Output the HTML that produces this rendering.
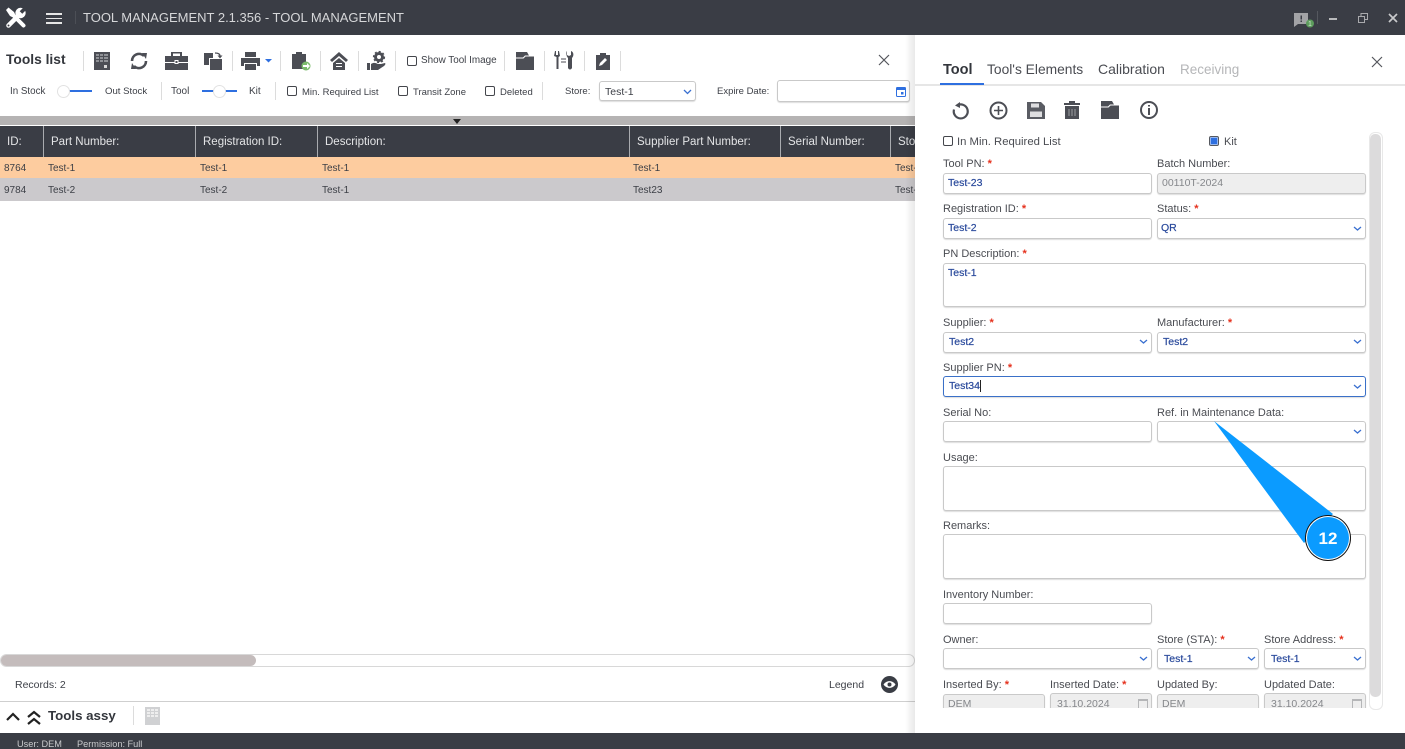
<!DOCTYPE html>
<html><head><meta charset="utf-8">
<style>
html,body{margin:0;padding:0;width:1405px;height:749px;overflow:hidden;background:#fff}
body{font-family:"Liberation Sans",sans-serif;font-size:10.5px;color:#3c3f46;position:relative}
.a,.t,.l,.i,.c,.s,.tx{position:absolute}
.t{white-space:nowrap;line-height:14px}
.l{white-space:nowrap;line-height:14px;font-size:11px;color:#4a4c52;left:0;margin-top:1px}
.l b{color:#e5301c;font-weight:bold;font-size:11px}
.i{box-sizing:border-box;border:1px solid #c9c9c9;border-radius:3px;background:#fff;height:21px;color:#2a4a9c;font-size:10.5px;line-height:18px;padding-left:4px;white-space:nowrap;box-shadow:0 1px 1px #ddd;-webkit-text-stroke:.2px #2a4a9c}
.g{background:#eee;color:#85878b;-webkit-text-stroke:0}
.c{box-sizing:border-box;width:10px;height:10px;border:1.5px solid #44464c;border-radius:2px;background:#fff}
.h{position:absolute;top:126px;height:31px;line-height:32px;color:#e3e4e6;font-size:11.5px;white-space:nowrap;border-left:1px solid #a9abaf;padding-left:7px;box-sizing:border-box}
.r{position:absolute;white-space:nowrap;font-size:10px;color:#3c3f46;line-height:14px}
.sp{position:absolute;width:1px;background:#dcdcdc}
svg{position:absolute;overflow:visible}
.ic{fill:#4c4e55}
.b{filter:blur(.3px)}
</style></head><body>

<!-- title bar -->
<div class="a" style="left:0;top:0;width:1405px;height:35px;background:#3a3d45"></div>
<svg class="b" style="left:5px;top:7px" width="22" height="22" viewBox="0 0 22 22">
<path fill="none" stroke="#fff" stroke-width="4" stroke-linecap="round" d="M10 10L18.500 18.500"/>
<path fill="#fff" d="M1 3l2.500-2.500L9 5l1.500 3L8 10.500 5 9z"/>
<path fill="none" stroke="#fff" stroke-width="4.500" stroke-linecap="round" d="M3.500 18.500L13 9"/>
<circle cx="15.500" cy="6" r="5.200" fill="#fff"/>
<path stroke="#3a3d45" stroke-width="3.600" d="M16 5.500L22 -.5"/>
<circle cx="3.500" cy="18.500" r="1" fill="#3a3d45"/>
</svg>
<div class="a" style="left:46px;top:13px;width:16px;height:1.500px;background:#e6e6e6"></div>
<div class="a" style="left:46px;top:17.500px;width:16px;height:1.500px;background:#e6e6e6"></div>
<div class="a" style="left:46px;top:22px;width:16px;height:1.500px;background:#e6e6e6"></div>
<div class="a" style="left:75px;top:11px;width:1px;height:13px;background:#4c4f56"></div>
<div class="t" style="left:83px;top:11px;font-size:13px;color:#d6d7d9">TOOL MANAGEMENT 2.1.356 - TOOL MANAGEMENT</div>
<svg class="b" style="left:1294px;top:13px" width="24" height="17" viewBox="0 0 24 17"><path fill="#a2a3a6" d="M0 0h14v11H4l-4 3z"/><rect x="6.500" y="2.500" width="1.500" height="4" fill="#3a3d45"/><rect x="6.500" y="7.500" width="1.500" height="1.500" fill="#3a3d45"/><circle cx="16" cy="10.500" r="4" fill="#5c9c5c"/><text x="16" y="13" text-anchor="middle" font-size="7" fill="#cfe5cf" font-family="Liberation Sans, sans-serif">1</text></svg>
<div class="a" style="left:1317px;top:11px;width:1px;height:13px;background:#55585f"></div>
<div class="a" style="left:1329px;top:18px;width:8px;height:2px;background:#b9babc"></div>
<svg style="left:1358px;top:13px" width="10" height="10" viewBox="0 0 10 10"><path fill="none" stroke="#a9aaad" stroke-width="1" d="M.5 3.500h6v6h-6zM3 3.500V.5h6.500v6H6.500"/></svg>
<svg style="left:1388px;top:13px" width="10" height="10" viewBox="0 0 10 10"><path stroke="#c9cacc" stroke-width="1.700" d="M1 1l8 8M9 1L1 9"/></svg>

<!-- toolbar left -->
<div class="t" style="left:6px;top:53px;font-size:13.800px;font-weight:bold;color:#33363c">Tools list</div>
<div class="sp" style="left:83px;top:51px;height:20px"></div>
<svg class="b" style="left:94px;top:52px" width="16" height="18" viewBox="0 0 16 18"><path class="ic" d="M0 0h16v18H0z"/><path fill="#8f9196" d="M2 2h3v2H2zM6 2h3v2H6zM10 2h4v2h-4zM2 5h3v2H2zM6 5h3v2H6zM10 5h4v2h-4zM2 8h3v2H2zM6 8h3v2H6zM10 8h4v2h-4z"/><path fill="#d8d8d8" d="M10 13h3v3h-3z"/></svg>
<svg class="b" style="left:129px;top:51px" width="20" height="20" viewBox="0 0 20 20"><path fill="none" stroke="#4c4e55" stroke-width="2.600" d="M3 10a7 7 0 0 1 12-5M17 10a7 7 0 0 1-12 5"/><path class="ic" d="M13 2l5 0-1 6zM7 18l-5 0 1-6z"/></svg>
<svg class="b" style="left:165px;top:52px" width="23" height="18" viewBox="0 0 23 18"><path class="ic" d="M0 4h23v6H0zM0 11h23v7H0zM6 4V0h11v4h-2V1.500H8V4z"/><rect x="9.500" y="8" width="4" height="4" fill="#fff"/><rect x="10.500" y="9" width="2" height="2" fill="#4c4e55"/></svg>
<svg class="b" style="left:204px;top:52px" width="18" height="18" viewBox="0 0 18 18"><path class="ic" d="M0 1h9v5H5v7H0z"/><path class="ic" d="M6 7h12v11H6z"/><path fill="none" stroke="#4c4e55" stroke-width="1.300" d="M11 1c3 0 5 1 5 3"/><path class="ic" d="M13.500 3.500h5L16 6.500z"/></svg>
<div class="sp" style="left:232px;top:51px;height:20px"></div>
<svg class="b" style="left:241px;top:52px" width="32" height="18" viewBox="0 0 32 18"><path class="ic" d="M4 0h11v5H4zM0 6h19v8h-3v-3H3v3H0zM4 12h11v6H4z"/><path fill="#2e6fe0" d="M24 7h7l-3.500 3.500z"/></svg>
<div class="sp" style="left:280px;top:51px;height:20px"></div>
<svg class="b" style="left:292px;top:51px" width="20" height="20" viewBox="0 0 20 20"><path class="ic" d="M0 3h4V1h6v2h4v15H0z"/><circle cx="14" cy="15" r="4.500" fill="#7cbb6c"/><path fill="#fff" d="M11 14h4v-2l3 3-3 3v-2h-4z"/></svg>
<div class="sp" style="left:320px;top:51px;height:20px"></div>
<svg class="b" style="left:330px;top:52px" width="18" height="18" viewBox="0 0 18 18"><path class="ic" d="M9 0l9 8-2 2-7-6-7 6-2-2zM3 11l6-5 6 5v7H3z"/><path fill="#fff" d="M6 11h6v1H6zM6 14h6v1H6z"/></svg>
<div class="sp" style="left:358px;top:51px;height:20px"></div>
<svg class="b" style="left:367px;top:51px" width="19" height="20" viewBox="0 0 19 20"><circle cx="12" cy="6" r="3.500" fill="none" stroke="#4c4e55" stroke-width="3"/><circle cx="12" cy="6" r="5.200" fill="none" stroke="#4c4e55" stroke-width="1.800" stroke-dasharray="2 2"/><path class="ic" d="M0 12h3v7H0zM4 13c3-2 5-1 7 0h3l4-1c1 1 0 2-1 3l-6 4H4z"/></svg>
<div class="sp" style="left:395px;top:51px;height:20px"></div>
<div class="c" style="left:407px;top:56px"></div>
<div class="t" style="left:421px;top:54px;font-size:9.900px">Show Tool Image</div>
<div class="sp" style="left:504px;top:51px;height:20px"></div>
<svg class="b" style="left:516px;top:52px" width="18" height="18" viewBox="0 0 18 18"><path class="ic" d="M0 0h11l2 3.500H9L7 5.500H0zM0 6.500h7.500l2-2H18V18H0z"/></svg>
<div class="sp" style="left:544px;top:51px;height:20px"></div>
<svg class="b" style="left:554px;top:51px" width="20" height="19" viewBox="0 0 20 19"><path class="ic" d="M1 0h1v4h2V0h1l1 5-1.500 1v12h-2V6L0 5zM13 0v4l2 1 2-1V0c3 1 3 5 1 7v10c-1 2-3 2-4 0V7c-2-2-2-6-1-7z"/><path stroke="#4c4e55" stroke-width="1" d="M7 8h5M7 11h5"/></svg>
<div class="sp" style="left:584px;top:51px;height:20px"></div>
<svg class="b" style="left:596px;top:53px" width="14" height="17" viewBox="0 0 14 17"><path class="ic" d="M0 2h4V0h6v2h4v15H0z"/><path fill="#fff" d="M3 13l1-3 5-5 2 2-5 5z"/></svg>
<div class="sp" style="left:620px;top:51px;height:20px"></div>
<svg style="left:879px;top:55px" width="10" height="10" viewBox="0 0 10 10"><path stroke="#55575d" stroke-width="1.200" d="M0 0l10 10M10 0L0 10"/></svg>

<!-- toolbar row 2 -->
<div class="t" style="left:10px;top:85px;font-size:9.800px">In Stock</div>
<div class="a" style="left:64px;top:90px;width:28px;height:2px;background:#2e6fe0"></div>
<div class="a" style="left:57px;top:85px;width:11px;height:11px;border-radius:50%;background:#fff;border:1px solid #e2e2e2"></div>
<div class="t" style="left:105px;top:85px;font-size:9.600px">Out Stock</div>
<div class="sp" style="left:161px;top:82px;height:18px"></div>
<div class="t" style="left:171px;top:85px;font-size:10px">Tool</div>
<div class="a" style="left:202px;top:90px;width:35px;height:2px;background:#2e6fe0"></div>
<div class="a" style="left:213px;top:85px;width:11px;height:11px;border-radius:50%;background:#fff;border:1px solid #e2e2e2"></div>
<div class="t" style="left:249px;top:85px;font-size:10px">Kit</div>
<div class="sp" style="left:275px;top:82px;height:18px"></div>
<div class="c" style="left:287px;top:86px"></div>
<div class="t" style="left:302px;top:86px;font-size:9.500px">Min. Required List</div>
<div class="c" style="left:398px;top:86px"></div>
<div class="t" style="left:413px;top:86px;font-size:9.500px">Transit Zone</div>
<div class="c" style="left:485px;top:86px"></div>
<div class="t" style="left:500px;top:86px;font-size:9.500px">Deleted</div>
<div class="sp" style="left:542px;top:82px;height:18px"></div>
<div class="t" style="left:565px;top:85px;font-size:9.500px">Store:</div>
<div class="i" style="left:599px;top:81px;width:97px;height:20px;color:#3c3f46;-webkit-text-stroke:0;padding-left:5px;line-height:20px">Test-1</div>
<svg style="left:683px;top:89px" width="9" height="6" viewBox="0 0 9 6"><path fill="none" stroke="#3a70d0" stroke-width="1.300" d="M1 1l3.500 3.500L8 1"/></svg>
<div class="t" style="left:717px;top:85px;font-size:9.500px">Expire Date:</div>
<div class="i" style="left:777px;top:80px;width:133px;height:22px"></div>
<svg style="left:896px;top:86px" width="10" height="11" viewBox="0 0 10 11"><rect x=".5" y="1.500" width="9" height="9" rx="1" fill="none" stroke="#2e6fe0"/><rect x=".5" y="1" width="9" height="3" fill="#2e6fe0"/><rect x="5" y="6" width="2.500" height="2.500" fill="#2e6fe0"/></svg>

<!-- grid -->
<div class="a" style="left:0;top:116px;width:915px;height:9px;background:#b5b3b3"></div>
<svg style="left:453px;top:119px" width="8" height="5" viewBox="0 0 8 5"><path fill="#222" d="M0 0h8L4 5z"/></svg>
<div class="a" style="left:0;top:126px;width:915px;height:31px;background:#3a3d45"></div>
<div class="t" style="left:7px;top:135px;color:#e3e4e6;font-size:11.500px">ID:</div>
<div class="h" style="left:43px;width:152px">Part Number:</div>
<div class="h" style="left:195px;width:122px">Registration ID:</div>
<div class="h" style="left:317px;width:312px">Description:</div>
<div class="h" style="left:629px;width:151px">Supplier Part Number:</div>
<div class="h" style="left:780px;width:110px">Serial Number:</div>
<div class="h" style="left:890px;width:25px;overflow:hidden">Store</div>
<div class="a" style="left:0;top:157px;width:915px;height:21px;background:#fdcc9f"></div>
<div class="a" style="left:0;top:178px;width:915px;height:22.500px;background:#cbc9cc"></div>
<div class="r" style="left:4px;top:162px">8764</div>
<div class="r" style="left:48px;top:162px">Test-1</div>
<div class="r" style="left:200px;top:162px">Test-1</div>
<div class="r" style="left:322px;top:162px">Test-1</div>
<div class="r" style="left:633px;top:162px">Test-1</div>
<div class="r" style="left:895px;top:162px;width:20px;overflow:hidden">Test-1</div>
<div class="r" style="left:4px;top:184px">9784</div>
<div class="r" style="left:48px;top:184px">Test-2</div>
<div class="r" style="left:200px;top:184px">Test-2</div>
<div class="r" style="left:322px;top:184px">Test-1</div>
<div class="r" style="left:633px;top:184px">Test23</div>
<div class="r" style="left:895px;top:184px;width:20px;overflow:hidden">Test-1</div>

<!-- bottom left -->
<div class="a" style="left:0;top:654px;width:915px;height:13px;box-sizing:border-box;border:1px solid #d8d8d8;border-radius:7px;background:#fff"></div>
<div class="a" style="left:1px;top:655px;width:255px;height:11px;border-radius:6px;background:#c4bcbc"></div>
<div class="t" style="left:15px;top:678px;font-size:10.500px">Records: 2</div>
<div class="t" style="left:829px;top:678px;font-size:10.500px">Legend</div>
<svg style="left:881px;top:676px" width="17" height="17" viewBox="0 0 17 17"><circle cx="8.500" cy="8.500" r="8.500" fill="#3a3d45"/><path fill="#fff" d="M2.500 8.500c3-4.500 9-4.500 12 0-3 4.500-9 4.500-12 0z"/><circle cx="8.500" cy="8.500" r="2" fill="#3a3d45"/></svg>
<div class="a" style="left:0;top:701px;width:915px;height:1px;background:#cfcfcf"></div>
<svg style="left:6px;top:710px" width="36" height="17" viewBox="0 0 36 17"><path fill="none" stroke="#222" stroke-width="2.200" d="M1 10l6-6 6 6M22 7l6-5 6 5M22 14l6-5 6 5"/></svg>
<div class="t" style="left:48px;top:709px;font-size:13.300px;font-weight:bold;color:#33363c">Tools assy</div>
<div class="sp" style="left:133px;top:706px;height:19px"></div>
<svg style="left:145px;top:707px" width="15" height="18" viewBox="0 0 15 18"><path fill="#d0d1d3" d="M0 0h15v18H0z"/><path fill="#eee" d="M2 2h3v2H2zM6 2h3v2H6zM10 2h3v2h-3zM2 5h3v2H2zM6 5h3v2H6zM10 5h3v2h-3zM2 8h3v2H2zM6 8h3v2H6zM10 8h3v2h-3z"/></svg>

<!-- right panel -->
<div class="a" style="left:905px;top:35px;width:10px;height:698px;background:linear-gradient(to right,rgba(0,0,0,0),rgba(0,0,0,.09))"></div>
<div class="a" style="left:915px;top:35px;width:490px;height:698px;background:#fff"></div>
<div class="t" style="left:943px;top:63px;font-size:14.500px;font-weight:bold;color:#33363c">Tool</div>
<div class="t" style="left:987px;top:63px;font-size:13.800px;color:#4a4c52">Tool's Elements</div>
<div class="t" style="left:1098px;top:62px;font-size:14px;color:#4a4c52">Calibration</div>
<div class="t" style="left:1180px;top:63px;font-size:13.500px;color:#b5b6b8">Receiving</div>
<div class="a" style="left:915px;top:84px;width:490px;height:2px;background:#e6e6e6"></div>
<div class="a" style="left:940px;top:83px;width:44px;height:2px;background:#2e6fe0"></div>
<svg style="left:1372px;top:57px" width="10" height="10" viewBox="0 0 10 10"><path stroke="#55575d" stroke-width="1.200" d="M0 0l10 10M10 0L0 10"/></svg>

<svg class="b" style="left:952px;top:102px" width="18" height="18" viewBox="0 0 18 18"><path fill="none" stroke="#4c4e55" stroke-width="2.200" d="M5 3.500a7 7 0 1 1-3 4"/><path class="ic" d="M8 0v6L3 3.500z"/></svg>
<svg class="b" style="left:989px;top:101px" width="19" height="19" viewBox="0 0 19 19"><circle cx="9.500" cy="9.500" r="8" fill="none" stroke="#4c4e55" stroke-width="2"/><path stroke="#4c4e55" stroke-width="1.600" d="M5 9.500h9M9.500 5v9"/></svg>
<svg class="b" style="left:1027px;top:101px" width="18" height="18" viewBox="0 0 18 18"><path fill="#5a5c63" d="M0 1h14l4 4v13H0z"/><path fill="#fff" opacity=".8" d="M4 2.500h8v4H4zM3 10.500h12V16H3z"/></svg>
<svg class="b" style="left:1064px;top:101px" width="16" height="18" viewBox="0 0 16 18"><path class="ic" d="M5 0h6v2h5v2H0V2h5zM1 5h14v13H1z"/><path fill="#fff" opacity=".45" d="M4.500 8h1v7h-1zM7.500 8h1v7h-1zM10.500 8h1v7h-1z"/></svg>
<svg class="b" style="left:1101px;top:101px" width="18" height="18" viewBox="0 0 18 18"><path class="ic" d="M0 0h11l2 3.500H9L7 5.500H0zM0 6.500h7.500l2-2H18V18H0z"/></svg>
<svg class="b" style="left:1140px;top:101px" width="18" height="18" viewBox="0 0 18 18"><circle cx="9" cy="9" r="8" fill="none" stroke="#4c4e55" stroke-width="2"/><path stroke="#4c4e55" stroke-width="2" d="M9 4v1.500M9 7v7"/></svg>

<div class="c" style="left:943px;top:136px"></div>
<div class="t" style="left:957px;top:135px;font-size:11.300px;color:#4a4c52">In Min. Required List</div>
<div class="c" style="left:1209px;top:136px;border-color:#55585f;background:#2e6fe0;box-shadow:inset 0 0 0 .5px #fff"></div>
<div class="t" style="left:1224px;top:135px;font-size:11px;color:#4a4c52">Kit</div>

<!-- scrollbar -->
<div class="a" style="left:1369px;top:132px;width:14px;height:578px;box-sizing:border-box;border:1px solid #e8e8e8;border-radius:6px"></div>
<div class="a" style="left:1370px;top:134px;width:11px;height:563px;border-radius:5px;background:#dcdbdc"></div>

<!-- form -->
<div class="t l" style="left:943px;top:156px">Tool PN: <b>*</b></div>
<div class="i" style="left:943px;top:173px;width:209px">Test-23</div>
<div class="t l" style="left:1157px;top:156px">Batch Number:</div>
<div class="i g" style="left:1157px;top:173px;width:209px">00110T-2024</div>

<div class="t l" style="left:943px;top:201px">Registration ID: <b>*</b></div>
<div class="i" style="left:943px;top:218px;width:209px">Test-2</div>
<div class="t l" style="left:1157px;top:201px">Status: <b>*</b></div>
<div class="i" style="left:1157px;top:218px;width:209px;padding-left:3px">QR</div>

<div class="t l" style="left:943px;top:246px">PN Description: <b>*</b></div>
<div class="i" style="left:943px;top:263px;width:423px;height:44px">Test-1</div>

<div class="t l" style="left:943px;top:315px">Supplier: <b>*</b></div>
<div class="i" style="left:943px;top:332px;width:209px;padding-left:5px">Test2</div>
<div class="t l" style="left:1157px;top:315px">Manufacturer: <b>*</b></div>
<div class="i" style="left:1157px;top:332px;width:209px;padding-left:5px">Test2</div>

<div class="t l" style="left:943px;top:360px">Supplier PN: <b>*</b></div>
<div class="i" style="left:943px;top:376px;width:423px;border-color:#3a70c8;padding-left:5px">Test34<span style="border-left:1px solid #222"></span></div>

<div class="t l" style="left:943px;top:405px">Serial No:</div>
<div class="i" style="left:943px;top:421px;width:209px"></div>
<div class="t l" style="left:1157px;top:405px">Ref. in Maintenance Data:</div>
<div class="i" style="left:1157px;top:421px;width:209px"></div>

<div class="t l" style="left:943px;top:450px">Usage:</div>
<div class="i" style="left:943px;top:466px;width:423px;height:45px"></div>
<div class="t l" style="left:943px;top:518px">Remarks:</div>
<div class="i" style="left:943px;top:534px;width:423px;height:45px"></div>
<div class="t l" style="left:943px;top:587px">Inventory Number:</div>
<div class="i" style="left:943px;top:603px;width:209px"></div>

<div class="t l" style="left:943px;top:632px">Owner:</div>
<div class="i" style="left:943px;top:648px;width:209px"></div>
<div class="t l" style="left:1157px;top:632px">Store (STA): <b>*</b></div>
<div class="i" style="left:1157px;top:648px;width:102px;padding-left:6px;line-height:20px">Test-1</div>
<div class="t l" style="left:1264px;top:632px">Store Address: <b>*</b></div>
<div class="i" style="left:1264px;top:648px;width:102px;padding-left:6px;line-height:20px">Test-1</div>

<div class="t l" style="left:943px;top:677px">Inserted By: <b>*</b></div>
<div class="t l" style="left:1050px;top:677px">Inserted Date: <b>*</b></div>
<div class="t l" style="left:1157px;top:677px">Updated By:</div>
<div class="t l" style="left:1264px;top:677px">Updated Date:</div>
<div class="a" style="left:940px;top:690px;width:428px;height:18px;overflow:hidden">
  <div class="i g" style="left:3px;top:4px;width:102px">DEM</div>
  <div class="i g" style="left:110px;top:3px;width:102px;padding-left:6px;line-height:20px">31.10.2024</div>
  <div class="i g" style="left:217px;top:4px;width:102px">DEM</div>
  <div class="i g" style="left:324px;top:3px;width:102px;padding-left:6px;line-height:20px">31.10.2024</div>
  <svg style="left:198px;top:8px" width="10" height="10" viewBox="0 0 10 10"><rect x=".5" y="1.500" width="9" height="9" fill="none" stroke="#b5b6b8"/><rect x=".5" y="1" width="9" height="2" fill="#b5b6b8"/></svg>
  <svg style="left:412px;top:8px" width="10" height="10" viewBox="0 0 10 10"><rect x=".5" y="1.500" width="9" height="9" fill="none" stroke="#b5b6b8"/><rect x=".5" y="1" width="9" height="2" fill="#b5b6b8"/></svg>
</div>

<!-- dropdown chevrons -->
<svg style="left:0;top:0" width="1405" height="749" viewBox="0 0 1405 749"><g fill="none" stroke="#3a70d0" stroke-width="1.300">
<path d="M1354 227l3.500 3 3.500-3"/>
<path d="M1140 340l3.500 3 3.500-3"/>
<path d="M1354 340l3.500 3 3.500-3"/>
<path d="M1354 385l3.500 3 3.500-3"/>
<path d="M1354 430l3.500 3 3.500-3"/>
<path d="M1140 657l3.500 3 3.500-3"/>
<path d="M1248 657l3.500 3 3.500-3"/>
<path d="M1354 657l3.500 3 3.500-3"/>
</g>
<!-- callout -->
<path fill="#0b9bff" d="M1214 421L1333 514 1304 543z"/>
<circle cx="1328" cy="538" r="23" fill="#111"/>
<circle cx="1328" cy="538" r="22" fill="#fff"/>
<circle cx="1328" cy="538" r="21" fill="#0b9bff"/>
<text x="1328" y="544" text-anchor="middle" font-family="Liberation Sans, sans-serif" font-size="17" font-weight="bold" fill="#fff">12</text>
</svg>

<!-- status bar -->
<div class="a" style="left:0;top:733px;width:1405px;height:16px;background:#3a3d45"></div>
<div class="t" style="left:17px;top:737px;font-size:9.200px;color:#c9cacc">User: DEM</div>
<div class="t" style="left:77px;top:737px;font-size:9.200px;color:#c9cacc">Permission: Full</div>
</body></html>
